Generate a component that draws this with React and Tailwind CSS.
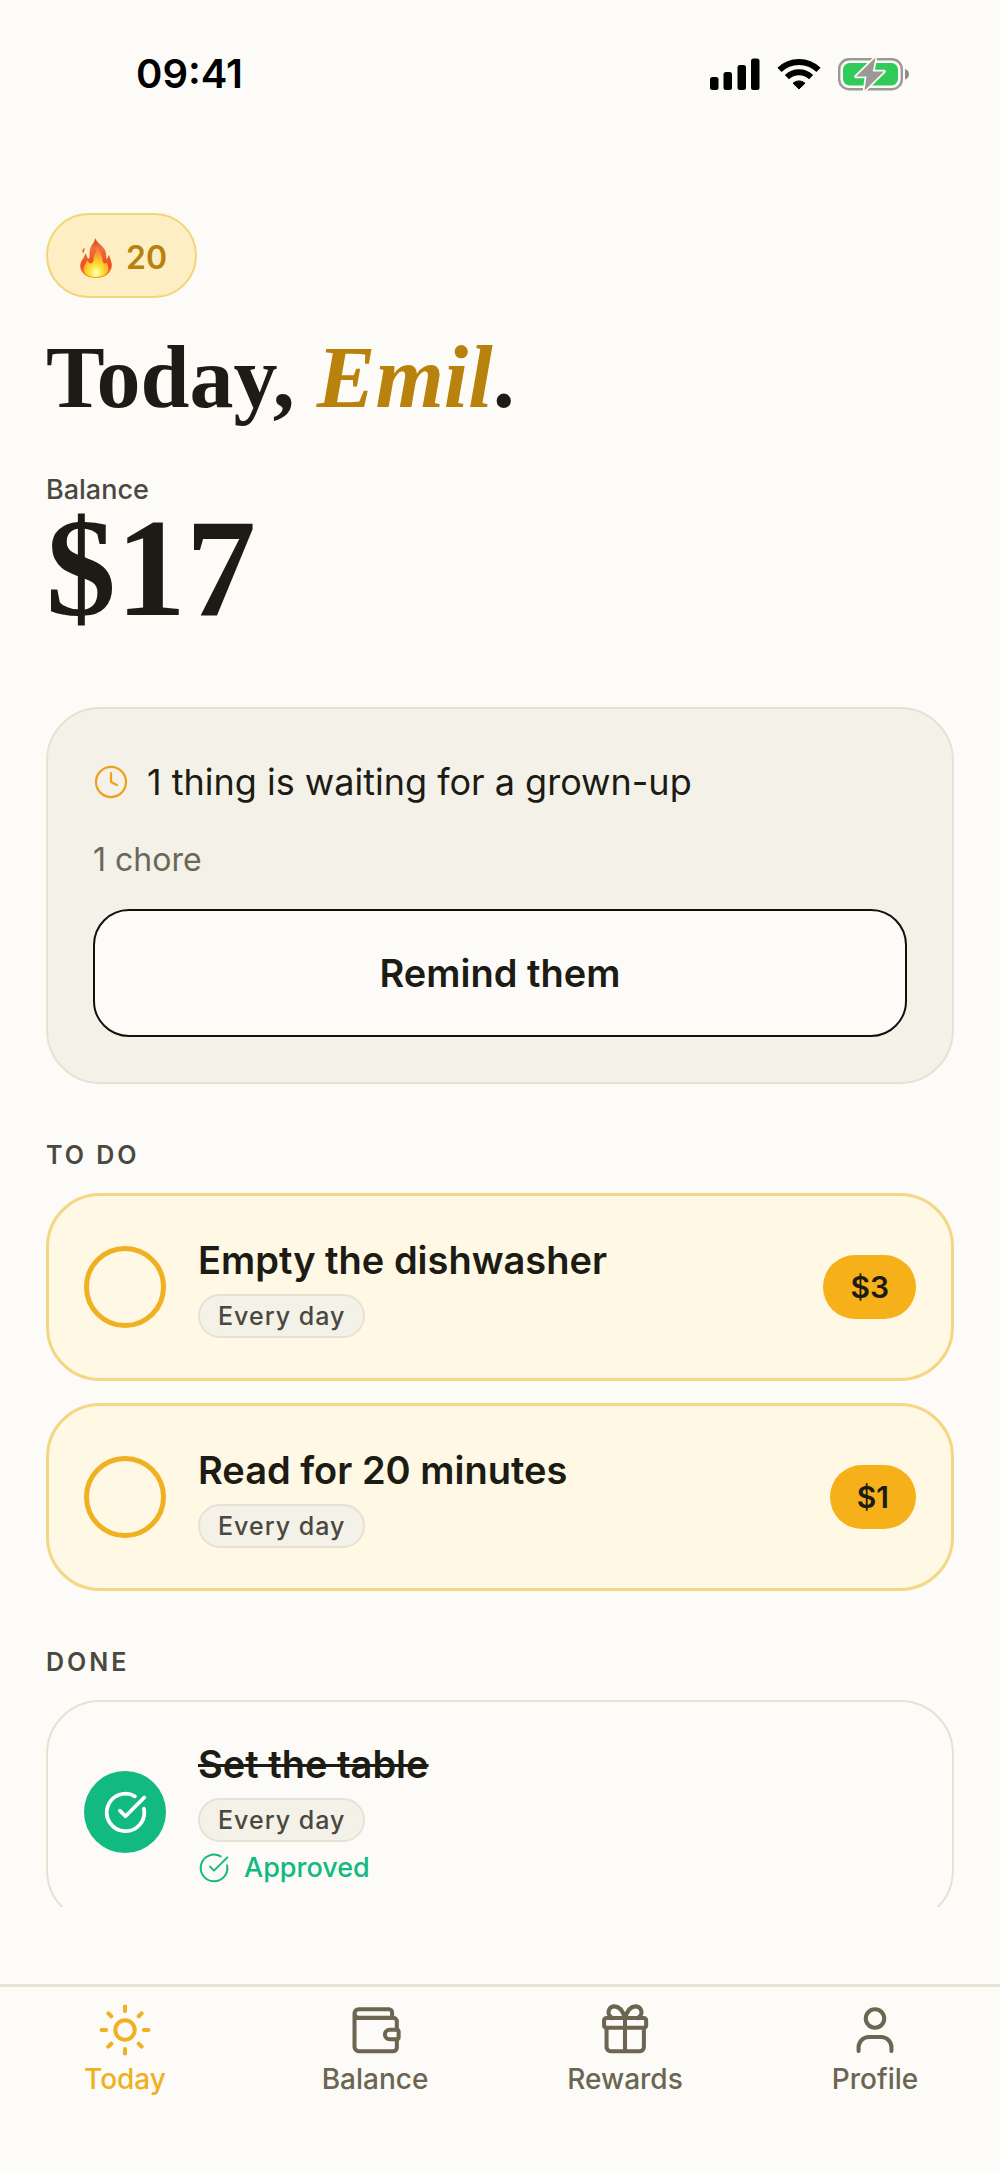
import { useState } from 'react';
import { CircleCheckBig, Clock } from 'lucide-react';

const CHORES = [
  { id: 'dishwasher', title: 'Empty the dishwasher', repeat: 'Every day', reward: '$3' },
  { id: 'read', title: 'Read for 20 minutes', repeat: 'Every day', reward: '$1' },
];

const TABS = [
  { id: 'today', label: 'Today', Icon: SunIcon },
  { id: 'balance', label: 'Balance', Icon: WalletIcon },
  { id: 'rewards', label: 'Rewards', Icon: GiftIcon },
  { id: 'profile', label: 'Profile', Icon: UserIcon },
];

function TabIcon({ children }) {
  return (
    <svg
      viewBox="0 0 24 24"
      className="size-[54px]"
      fill="none"
      stroke="currentColor"
      strokeWidth="1.8"
      strokeLinecap="round"
      strokeLinejoin="round"
      aria-hidden="true"
    >
      {children}
    </svg>
  );
}

function SunIcon() {
  return (
    <TabIcon>
      <circle cx="12" cy="12" r="4.3" />
      <path d="M12 1.6v2M12 20.4v2M1.6 12h2M20.4 12h2M4.6 4.6l1.3 1.3M18.1 18.1l1.3 1.3M4.6 19.4l1.3-1.3M18.1 5.9l1.3-1.3" />
    </TabIcon>
  );
}

function WalletIcon() {
  return (
    <TabIcon>
      <path d="M19.6 6.6V4.2a1.4 1.4 0 0 0-1.4-1.4H4.8a1.9 1.9 0 0 0 0 3.8h15.4a1.5 1.5 0 0 1 1.5 1.5v3.8M2.9 4.7v14.8a1.9 1.9 0 0 0 1.9 1.9h15.4a1.5 1.5 0 0 0 1.5-1.5v-3.8" />
      <path d="M21.6 11.9h-3.1a2.1 2.1 0 0 0 0 4.2h3.1a.9.9 0 0 0 .9-.9v-2.4a.9.9 0 0 0-.9-.9z" />
    </TabIcon>
  );
}

function GiftIcon() {
  return (
    <TabIcon>
      <rect x="2.7" y="6.7" width="18.7" height="4.3" rx="1" />
      <path d="M3.8 11v8.6a1.8 1.8 0 0 0 1.8 1.8h13a1.8 1.8 0 0 0 1.8-1.8V11M12 6.7v14.7" />
      <path d="M12 6.7C11 3.4 9.2 1.5 7.3 1.5a2.6 2.6 0 0 0-2 4.3c.3.4.7.7 1.1.9M12 6.7c1-3.3 2.8-5.2 4.7-5.2a2.6 2.6 0 0 1 2 4.3c-.3.4-.7.7-1.1.9" />
    </TabIcon>
  );
}

function UserIcon() {
  return (
    <TabIcon>
      <circle cx="12" cy="6.9" r="4.1" />
      <path d="M4.7 21.3v-1.6a4.6 4.6 0 0 1 4.6-4.6h5.4a4.6 4.6 0 0 1 4.6 4.6v1.6" />
    </TabIcon>
  );
}

function Flame() {
  return (
    <svg viewBox="0 0 32 40" className="h-10 w-8" aria-hidden="true">
      <defs>
        <linearGradient id="flame" x1="0" y1="0" x2="0" y2="1">
          <stop offset="0" stopColor="#c8431f" />
          <stop offset="0.25" stopColor="#f0703a" />
          <stop offset="0.7" stopColor="#ee4a24" />
          <stop offset="1" stopColor="#f6a313" />
        </linearGradient>
        <radialGradient id="glow" cx="0.5" cy="0.85" r="0.75">
          <stop offset="0" stopColor="#fffbe0" />
          <stop offset="0.3" stopColor="#ffe93b" />
          <stop offset="0.65" stopColor="#fdb52c" />
          <stop offset="1" stopColor="#f5823e" />
        </radialGradient>
      </defs>
      <path
        d="M15 0c-.2 4-2.800 6-4.300 9.200-1.400 3-1 7-1.200 9.800-.2 2-1.800 2.200-2.200.6-.4-1.700-.8-3.200-2.300-4.400.5 3.300-3.800 6.400-4.600 11.200C-.8 34.400 6.200 40 16 40c9.700 0 16.500-6 15.700-14-.3-3-1.700-5.600-2.700-9.200-.9 1.300-1.500 3.600-2.300 4.800-.7-2.600 0-6.200-1.900-9.900C22.500 7.200 17.500 5.500 15 0z"
        fill="url(#flame)"
      />
      <path
        d="M16.500 9c.8 4.500-3 7-3 12.500 0 3-2 5-4.300 3.200-1-.8-1.500-1.800-1.800-2.800-1 3-3.700 5-3.700 9C3.700 36 9 39 16 39s12.300-3.200 12.300-8.200c0-2.700-.9-4.300-1.300-6.300-1.300 1.700-3.800 1.300-4.300-1.200-.8-4.300-1.200-10-6.200-14.300z"
        fill="url(#glow)"
      />
      <path d="M3 15.500c-1.300-1.700-.6-4.200 1.500-5.700.2 2.400-.3 3.700-1.500 5.700z" fill="#e2582c" />
    </svg>
  );
}

function StatusBar() {
  return (
    <div className="flex h-[148px] shrink-0 items-center justify-between pl-[136px] pr-[91px] text-black">
      <span className="text-[40px] font-semibold leading-[48px]">09:41</span>
      <div className="flex items-center gap-[17px]">
        <svg viewBox="0 0 50 32" className="h-8 w-[50px]" fill="currentColor" aria-hidden="true">
          <rect x="0" y="19" width="8.500" height="13" rx="2.500" />
          <rect x="13.500" y="14" width="8.500" height="18" rx="2.500" />
          <rect x="27.500" y="7" width="8.500" height="25" rx="2.500" />
          <rect x="41" y="0.500" width="8.500" height="31.500" rx="2.500" />
        </svg>
        <svg viewBox="0 0 44 32" className="h-8 w-11" aria-hidden="true">
          <g fill="none" stroke="currentColor" strokeWidth="6">
            <path d="M2.500 11.800a28 28 0 0 1 39 0" />
            <path d="M9.900 19.200a17.500 17.500 0 0 1 24.200 0" />
          </g>
          <path
            d="M16 25.200a9 9 0 0 1 12 0L22 31z"
            fill="currentColor"
            stroke="currentColor"
            strokeWidth="1"
            strokeLinejoin="round"
          />
        </svg>
        <svg viewBox="0 0 71 34" className="h-[34px] w-[71px]" aria-hidden="true">
          <rect x="1.200" y="2.200" width="62.600" height="30" rx="10" fill="none" stroke="#9b9896" strokeWidth="2.400" />
          <path d="M67 12c5.300 1.500 5.300 9 0 10.500z" fill="#8f8d8b" />
          <rect x="5" y="6" width="55" height="22.500" rx="6.500" fill="#30cb58" />
          <path
            d="M37.500 0.500L18 19.500h10.500L26.500 33.500 46 14.500H34.800z"
            fill="#9b9896"
            stroke="#fbfaf6"
            strokeWidth="3.500"
            paintOrder="stroke"
            strokeLinejoin="round"
          />
        </svg>
      </div>
    </div>
  );
}

function SectionLabel({ children }) {
  return (
    <h2 className="mb-[22px] mt-[55px] text-[25px] font-semibold uppercase leading-8 tracking-[3px] text-[#4a483f]">
      {children}
    </h2>
  );
}

function RepeatChip({ children }) {
  return (
    <span className="flex h-11 items-center rounded-full border-2 border-[#e6e2d3] bg-[#f4f1e8] px-[18px] text-[25px] font-medium leading-8 tracking-[1px] text-[#4a483f]">
      {children}
    </span>
  );
}

function TodoCard({ chore, checked, onToggle }) {
  return (
    <li className="flex items-center gap-8 rounded-[54px] border-3 border-[#f4d684] bg-[#fef8e4] px-[35px] py-10">
      <input
        id={chore.id}
        type="checkbox"
        checked={checked}
        onChange={onToggle}
        className="size-[82px] shrink-0 appearance-none rounded-full border-[5px] border-[#efb022] checked:bg-[#f5b01a]"
      />
      <div className="flex min-w-0 flex-1 flex-col items-start gap-2.5">
        <label htmlFor={chore.id} className="text-[38px] font-semibold leading-[48px]">
          {chore.title}
        </label>
        <RepeatChip>{chore.repeat}</RepeatChip>
      </div>
      <span className="rounded-full bg-[#f5b01a] px-[27px] py-3 text-[30px] font-semibold leading-10">
        {chore.reward}
      </span>
    </li>
  );
}

function DoneCard() {
  return (
    <div className="flex items-center gap-8 rounded-[54px] border-2 border-[#e6e2d3] bg-[#fcfbf7] px-9 py-[38px]">
      <div className="grid size-[82px] shrink-0 place-items-center">
        <input
          id="table"
          type="checkbox"
          defaultChecked
          className="col-start-1 row-start-1 size-[82px] appearance-none rounded-full bg-[#12b981]"
        />
        <CircleCheckBig size={45} className="pointer-events-none col-start-1 row-start-1 text-white" />
      </div>
      <div className="flex min-w-0 flex-1 flex-col items-start gap-2.5">
        <label htmlFor="table" className="text-[38px] font-semibold leading-[48px] line-through decoration-3">
          Set the table
        </label>
        <RepeatChip>Every day</RepeatChip>
        <p className="flex items-center gap-3.5 text-[27px] font-medium leading-8 text-[#12b981]">
          <CircleCheckBig size={32} strokeWidth={1.5} />
          Approved
        </p>
      </div>
    </div>
  );
}

export default function App() {
  const [tab, setTab] = useState('today');
  const [checked, setChecked] = useState({});

  const toggle = (id) => setChecked((prev) => ({ ...prev, [id]: !prev[id] }));

  return (
    <div className="flex h-screen flex-col bg-[#fcfbf7] font-['Inter',sans-serif] text-[#1c1b14]">
      <StatusBar />

      <main className="min-h-0 flex-1 overflow-y-auto px-[46px] pt-[65px] [scrollbar-width:none]">
        <div className="flex h-[85px] w-fit items-center gap-3.5 rounded-full border-2 border-[#f4d478] bg-[#feeec3] pl-8 pr-7 pt-1 text-[32px] font-semibold leading-10 text-[#b8800f]">
          <Flame />
          20
        </div>

        <h1 className="mt-8 font-['Liberation_Serif',serif] text-[88px] font-bold leading-[96px]">
          Today, <em className="text-[#b9820c]">Emil</em>.
        </h1>

        <p className="mt-12 text-[27px] font-medium leading-8 text-[#4a483f]">Balance</p>
        <p className="font-['Liberation_Serif',serif] text-[140px] font-bold leading-[124px]">$17</p>

        <section className="mt-[77px] rounded-[54px] border-2 border-[#e6e2d3] bg-[#f4f1e8] p-[45px]">
          <p className="flex items-center gap-[18px] text-[36px] leading-[56px]">
            <Clock size={36} strokeWidth={1.5} className="text-[#f0a020]" />
            1 thing is waiting for a grown-up
          </p>
          <p className="mt-[30px] text-[32px] leading-10 text-[#6b6757]">1 chore</p>
          <button
            type="button"
            className="mt-[29px] h-32 w-full rounded-[36px] border-2 border-[#12110c] bg-[#fcfbf7] text-[38px] font-semibold leading-[48px]"
          >
            Remind them
          </button>
        </section>

        <SectionLabel>To do</SectionLabel>
        <ul className="flex flex-col gap-[22px]">
          {CHORES.map((chore) => (
            <TodoCard
              key={chore.id}
              chore={chore}
              checked={!!checked[chore.id]}
              onToggle={() => toggle(chore.id)}
            />
          ))}
        </ul>

        <SectionLabel>Done</SectionLabel>
        <DoneCard />
      </main>

      <nav className="mt-[77px] grid shrink-0 grid-cols-4 border-t-3 border-[#e9e4d8] pb-[76px] pt-4">
        {TABS.map(({ id, label, Icon }) => (
          <button
            key={id}
            type="button"
            onClick={() => setTab(id)}
            className={`flex flex-col items-center gap-1 text-[28px] font-medium leading-9 ${
              tab === id ? 'text-[#efb022]' : 'text-[#6b6552]'
            }`}
          >
            <Icon />
            {label}
          </button>
        ))}
      </nav>
    </div>
  );
}
